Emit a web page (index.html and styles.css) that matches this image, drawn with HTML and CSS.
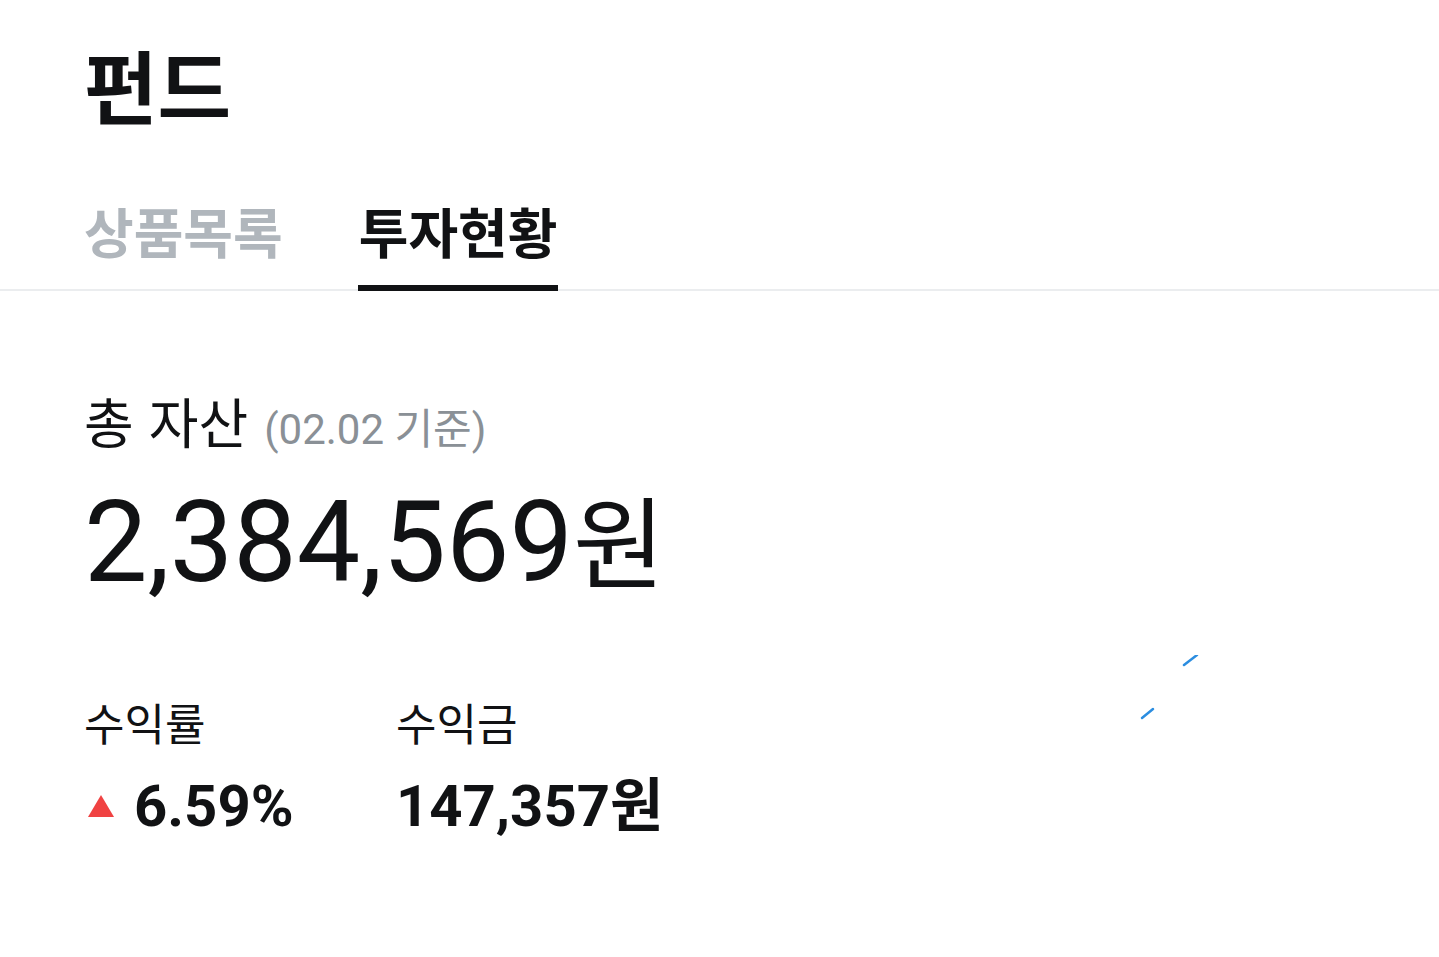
FILE: index.html
```html
<!DOCTYPE html>
<html lang="ko">
<head>
    <meta charset="UTF-8">
    <meta name="viewport" content="width=device-width, initial-scale=1.0">
    <title>펀드</title>
    <link rel="stylesheet" href="styles.css">
</head>
<body>
    <div class="page">
        <h1 class="title">펀드</h1>

        <div class="tabs">
            <div class="tab">상품목록</div>
            <div class="tab active">투자현황</div>
        </div>

        <div class="summary">
            <div class="asset-label">총 자산<span class="asset-date">(02.02 기준)</span></div>
            <div class="asset-total">2,384,569<span class="won">원</span></div>

            <div class="stats">
                <div class="stat">
                    <div class="stat-label">수익률</div>
                    <div class="stat-value"><span class="up-arrow"></span>6.59%</div>
                </div>
                <div class="stat">
                    <div class="stat-label">수익금</div>
                    <div class="stat-value">147,357원</div>
                </div>
            </div>

            <!-- 차트 그리는 중 -->
            <svg class="chart" width="80" height="80" viewBox="0 0 80 80">
                <line x1="56" y1="10" x2="69" y2="0" stroke="#2b8de0" stroke-width="2.5" stroke-linecap="round"/>
                <line x1="14" y1="63" x2="25" y2="54" stroke="#2b8de0" stroke-width="2.5" stroke-linecap="round"/>
            </svg>
        </div>
    </div>
</body>
</html>
```

FILE: styles.css
```css
body {
    margin: 0;
    background: #fff;
    font-family: Roboto, "Noto Sans CJK KR", sans-serif;
    color: #111214;
}

.page {
    width: 1439px;
}

.title {
    margin: 0;
    padding: 28px 0 0 84px;
    font-family: "Noto Sans CJK KR", sans-serif;
    font-size: 80px;
    font-weight: 700;
    line-height: 110px;
}

.tabs {
    display: flex;
    gap: 74px;
    margin-top: 63px;
    padding-left: 84px;
    border-bottom: 2px solid #ebedef;
}

.tab {
    font-family: "Noto Sans CJK KR", sans-serif;
    font-size: 54px;
    font-weight: 700;
    line-height: 60px;
    padding: 0 1px 24px;
    color: #b0b6bc;
    margin-bottom: -2px;
    border-bottom: 6px solid transparent;
}

.tab:first-child {
    padding-left: 0;
}

.tab.active {
    color: #111214;
    border-bottom-color: #111214;
}

.summary {
    position: relative;
    padding: 100px 0 0 84px;
}

.asset-label {
    font-family: "Noto Sans CJK KR", sans-serif;
    font-size: 54px;
    line-height: 60px;
}

.asset-date {
    margin-left: 16px;
    font-family: Roboto, "Noto Sans CJK KR", sans-serif;
    font-size: 42px;
    color: #8a9096;
}

.asset-total {
    margin-top: 18px;
    font-size: 113px;
    line-height: 120px;
}

.won {
    font-family: "Noto Sans CJK KR", sans-serif;
    font-size: 100px;
}

.stats {
    display: flex;
    margin-top: 94px;
}

.stat {
    width: 312px;
}

.stat-label {
    font-family: "Noto Sans CJK KR", sans-serif;
    font-size: 44px;
    line-height: 50px;
}

.stat-value {
    display: flex;
    align-items: center;
    margin-top: 24px;
    font-size: 58px;
    font-weight: 700;
    line-height: 70px;
}

.up-arrow {
    width: 0;
    height: 0;
    margin: 0 20px 0 4px;
    border-left: 13px solid transparent;
    border-right: 13px solid transparent;
    border-bottom: 22px solid #f04242;
}

.chart {
    position: absolute;
    left: 1128px;
    top: 364px;
}
```
